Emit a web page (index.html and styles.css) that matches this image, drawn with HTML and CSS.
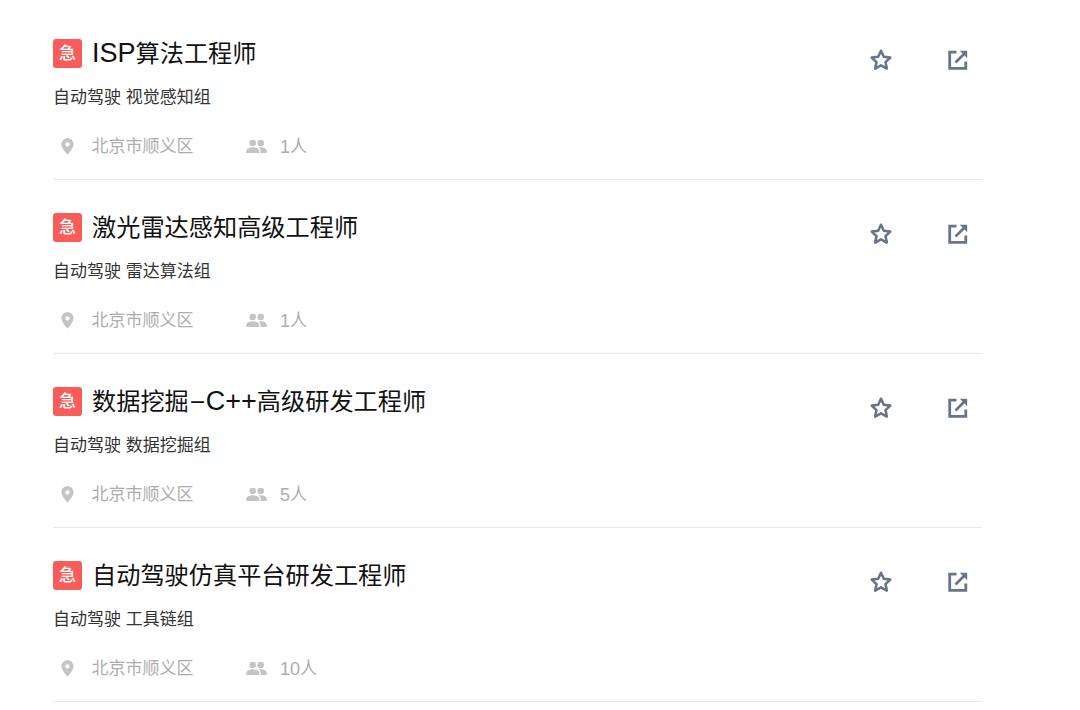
FILE: index.html
```html
<!DOCTYPE html>
<html lang="zh-CN">
<head>
<meta charset="utf-8">
<title>职位列表</title>
<link rel="stylesheet" href="styles.css">
</head>
<body>
<svg class="defs" width="0" height="0" aria-hidden="true">
  <symbol id="i-pin" viewBox="0 0 14 18"><path fill-rule="evenodd" d="M7 .2C3.300.2.400 3.100.400 6.700.400 11 7 17.800 7 17.800s6.600-6.800 6.600-11.100C13.600 3.100 10.700.2 7 .2zm0 8.900a2.400 2.400 0 1 1 0-4.800 2.400 2.400 0 0 1 0 4.800z"/></symbol>
  <symbol id="i-people" viewBox="0 0 22 16"><circle cx="7" cy="4.200" r="3.500"/><circle cx="15.500" cy="4.200" r="3.500"/><path d="M0 15v-2.200C0 10.300 3.700 8.800 7 8.800s7 1.500 7 4V15z"/><path d="M15.300 15v-2.400c0-1.500-.7-2.700-1.900-3.600.7-.2 1.500-.2 2.200-.2 3 0 6.400 1.400 6.400 3.800V15z"/></symbol>
  <symbol id="i-star" viewBox="0 0 24 24"><path fill="none" stroke="currentColor" stroke-width="2.600" stroke-linejoin="round" d="M12 2.800l2.800 6 6.500.8-4.800 4.500 1.300 6.500-5.800-3.200-5.800 3.200 1.300-6.500-4.800-4.500 6.500-.8z"/></symbol>
  <symbol id="i-open" viewBox="0 0 20 20"><path fill="none" stroke="currentColor" stroke-width="2.800" d="M8.500 2.200H1.700v16.100h16.100v-6.800"/><path fill="none" stroke="currentColor" stroke-width="2.600" d="M7.500 12.500L17 3"/><path d="M11.800.8h7.400v7.400z"/></symbol>
</svg>
<ul class="list">
  <li class="job">
    <div class="main">
      <div class="head"><span class="badge">急</span><h2 class="title"><span class="latin">ISP</span>算法工程师</h2></div>
      <p class="dept">自动驾驶 视觉感知组</p>
      <div class="meta">
        <span class="loc"><svg class="pin"><use href="#i-pin"/></svg>北京市顺义区</span>
        <span class="num"><svg class="people"><use href="#i-people"/></svg><span class="count">1</span>人</span>
      </div>
    </div>
    <div class="actions"><svg class="star"><use href="#i-star"/></svg><svg class="open"><use href="#i-open"/></svg></div>
  </li>
  <li class="job">
    <div class="main">
      <div class="head"><span class="badge">急</span><h2 class="title">激光雷达感知高级工程师</h2></div>
      <p class="dept">自动驾驶 雷达算法组</p>
      <div class="meta">
        <span class="loc"><svg class="pin"><use href="#i-pin"/></svg>北京市顺义区</span>
        <span class="num"><svg class="people"><use href="#i-people"/></svg><span class="count">1</span>人</span>
      </div>
    </div>
    <div class="actions"><svg class="star"><use href="#i-star"/></svg><svg class="open"><use href="#i-open"/></svg></div>
  </li>
  <li class="job">
    <div class="main">
      <div class="head"><span class="badge">急</span><h2 class="title">数据挖掘<span class="dash">-</span><span class="latin">C++</span>高级研发工程师</h2></div>
      <p class="dept">自动驾驶 数据挖掘组</p>
      <div class="meta">
        <span class="loc"><svg class="pin"><use href="#i-pin"/></svg>北京市顺义区</span>
        <span class="num"><svg class="people"><use href="#i-people"/></svg><span class="count">5</span>人</span>
      </div>
    </div>
    <div class="actions"><svg class="star"><use href="#i-star"/></svg><svg class="open"><use href="#i-open"/></svg></div>
  </li>
  <li class="job">
    <div class="main">
      <div class="head"><span class="badge">急</span><h2 class="title">自动驾驶仿真平台研发工程师</h2></div>
      <p class="dept">自动驾驶 工具链组</p>
      <div class="meta">
        <span class="loc"><svg class="pin"><use href="#i-pin"/></svg>北京市顺义区</span>
        <span class="num"><svg class="people"><use href="#i-people"/></svg><span class="count">10</span>人</span>
      </div>
    </div>
    <div class="actions"><svg class="star"><use href="#i-star"/></svg><svg class="open"><use href="#i-open"/></svg></div>
  </li>
</ul>
</body>
</html>
```
FILE: styles.css
```css
* { box-sizing: border-box; }
html, body { margin: 0; padding: 0; background: #fff; }
body {
  height: 710px;
  overflow: hidden;
  font-family: "Liberation Sans", "Noto Sans CJK SC", sans-serif;
  padding-top: 6px;
}
.defs { display: block; height: 0; }
.list { list-style: none; margin: 0 0 0 53px; padding: 0; width: 929px; }
.job {
  height: 174px;
  border-bottom: 1px solid #e8e8e8;
  display: flex;
  justify-content: space-between;
  padding-top: 33px;
}
.head { display: flex; align-items: center; height: 29px; gap: 10px; }
.badge {
  width: 29px;
  height: 29px;
  background: #fa5c5a;
  border-radius: 3px;
  color: #fff;
  font-size: 17px;
  font-weight: 500;
  line-height: 29px;
  text-align: center;
}
.title { margin: 0; font-size: 24.2px; font-weight: 400; line-height: 29px; color: #111; white-space: nowrap; }
.latin { font-size: 27px; line-height: 29px; }
.dash {
  display: inline-block;
  width: 17px;
  font-size: 22px;
  line-height: 29px;
  text-align: center;
  transform: translateY(-2px) scaleX(2.4);
}
.dept { margin: 18px 0 0; font-size: 17px; line-height: 24px; color: #333; }
.meta { display: flex; margin-top: 25px; font-size: 17px; line-height: 24px; color: #adadad; }
.loc { display: flex; align-items: center; width: 193px; }
.num { display: flex; align-items: center; }
.count { font-size: 18px; }
.pin { width: 13px; height: 17px; margin: -2px 17.5px 0 8px; fill: #c4c4c4; }
.people { width: 21px; height: 15px; margin: -2px 13px 0 0; fill: #c4c4c4; }
.actions { display: flex; gap: 55px; padding: 9px 14.5px 0 0; color: #68748c; fill: #68748c; }
.star { width: 24px; height: 24px; }
.open { width: 20px; height: 20px; margin-top: 2px; }
```
